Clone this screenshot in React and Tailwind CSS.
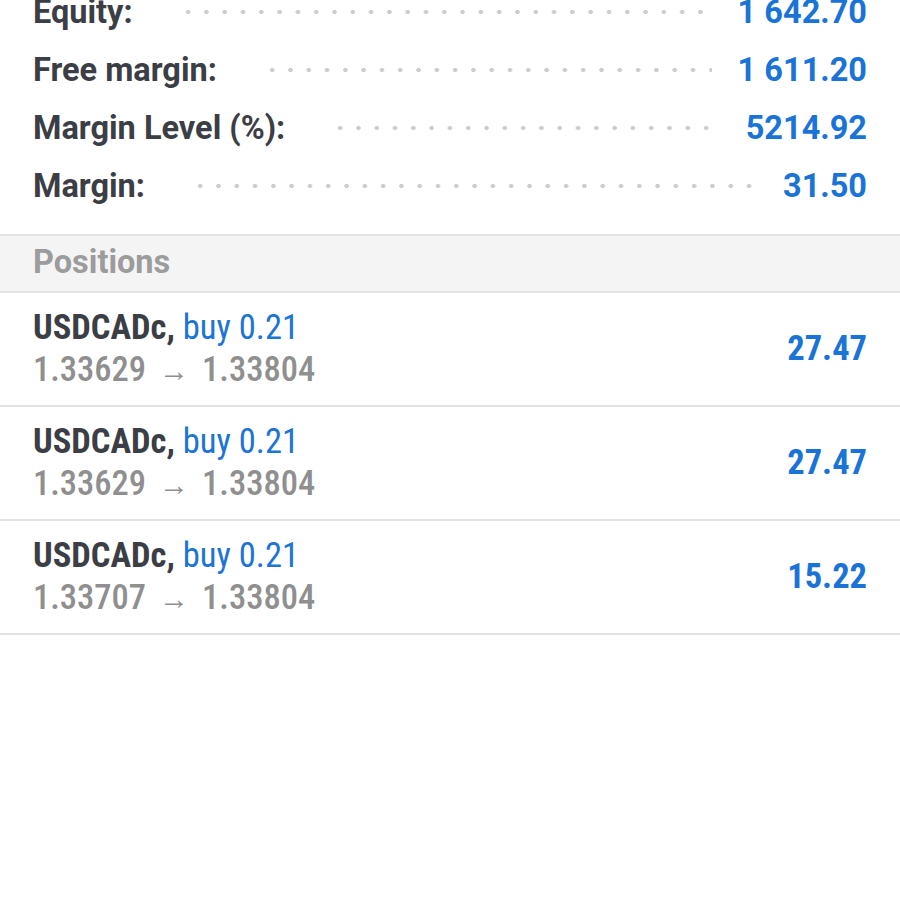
const summary = [
  { label: 'Equity:', value: '1 642.70' },
  { label: 'Free margin:', value: '1 611.20' },
  { label: 'Margin Level (%):', value: '5214.92' },
  { label: 'Margin:', value: '31.50' },
];

const positions = [
  { symbol: 'USDCADc', side: 'buy 0.21', open: '1.33629', current: '1.33804', profit: '27.47' },
  { symbol: 'USDCADc', side: 'buy 0.21', open: '1.33629', current: '1.33804', profit: '27.47' },
  { symbol: 'USDCADc', side: 'buy 0.21', open: '1.33707', current: '1.33804', profit: '15.22' },
];

export default function App() {
  return (
    <div className="w-[900px] h-[900px] overflow-hidden bg-white font-['Roboto',sans-serif]">
      {/* Account summary */}
      <div className="-mt-[17px] pb-[19px]">
        {summary.map((row) => (
          <div key={row.label} className="flex items-center h-[58px] px-[33px] text-[32.5px] leading-[58px] font-bold">
            <span className="text-[#3b3e44] whitespace-nowrap">{row.label}</span>
            <div className="flex-1 h-[6px] ml-[46px] mr-[26px] bg-[radial-gradient(circle,#cdcdcd_1.9px,transparent_2.5px)] bg-[length:18.3px_6px] bg-repeat-x" />
            <span className="text-[#1a73d6] whitespace-nowrap">{row.value}</span>
          </div>
        ))}
      </div>

      {/* Positions header */}
      <div className="h-[59px] border-y-2 border-[#e3e3e3] bg-[#f4f4f4] px-[33px] text-[32.5px] leading-[52px] font-bold text-[#9c9c9c]">
        Positions
      </div>

      {/* Positions list */}
      {positions.map((p, i) => (
        <div key={i} className="flex items-center justify-between px-[33px] py-[13px] border-b-2 border-[#e3e3e3] font-['Roboto_Condensed','Roboto',sans-serif]">
          <div className="text-[34.5px] leading-[42px]">
            <div className="whitespace-nowrap">
              <span className="font-bold text-[#3b3e44]">{p.symbol},</span>{' '}
              <span className="text-[#1c74d4]">{p.side}</span>
            </div>
            <div className="whitespace-nowrap text-[#8f8f8f] font-medium">
              {p.open}
              <span className="mx-[13px] text-[30px]">→</span>
              {p.current}
            </div>
          </div>
          <div className="text-[34.5px] font-bold text-[#1a73d6]">{p.profit}</div>
        </div>
      ))}
    </div>
  );
}
